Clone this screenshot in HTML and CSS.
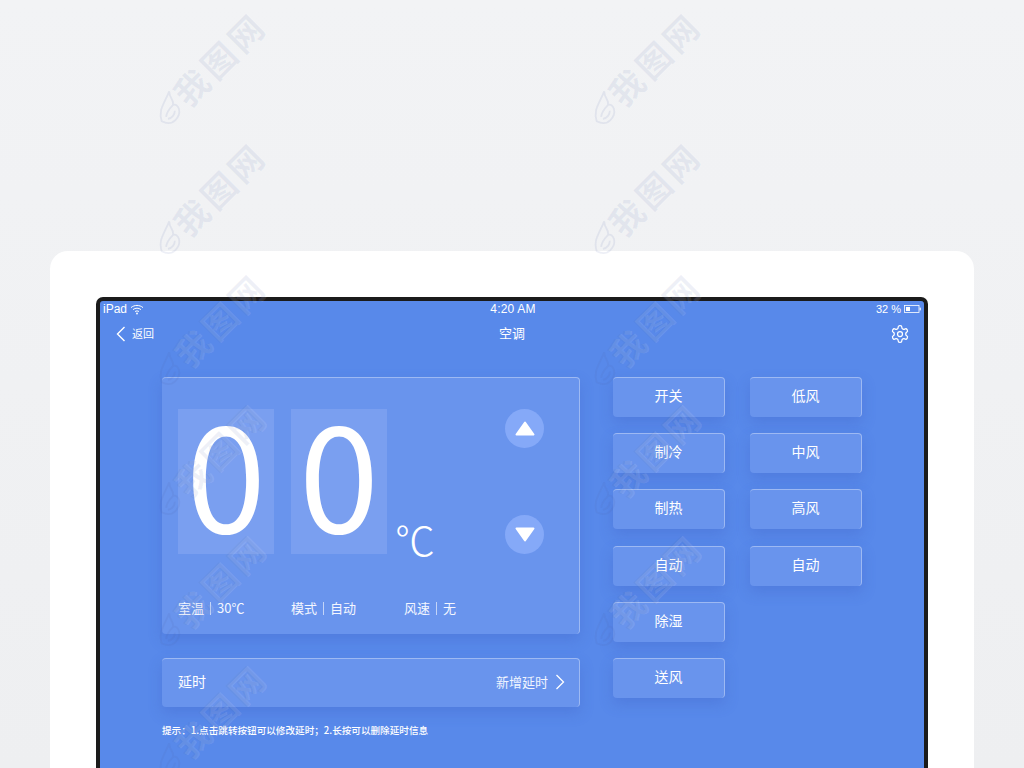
FILE: index.html
```html
<!DOCTYPE html>
<html lang="zh-CN">
<head>
    <meta charset="UTF-8">
    <meta name="viewport" content="width=device-width, initial-scale=1.0">
    <title>空调</title>
    <link rel="stylesheet" href="styles.css">
</head>
<body>
    <div class="sheet">
        <div class="device">
            <!-- Status bar -->
            <div class="status-bar">
                <div class="status-left">
                    <span>iPad</span>
                    <svg class="wifi" width="14" height="11" viewBox="0 0 14 11" fill="none" stroke="#fff" stroke-width="1">
                        <path d="M1 3.6C4.4.7 9.6.7 13 3.6"/>
                        <path d="M3 5.6c2.3-1.9 5.7-1.9 8 0"/>
                        <path d="M5 7.6c1.2-.9 2.8-.9 4 0"/>
                        <circle cx="7" cy="9.5" r=".9" fill="#fff" stroke="none"/>
                    </svg>
                </div>
                <span class="status-time">4:20 AM</span>
                <div class="status-right">
                    <span>32 %</span>
                    <svg width="17" height="8" viewBox="0 0 17 8">
                        <rect x=".5" y=".5" width="14.5" height="7" fill="none" stroke="#fff" stroke-width=".8"/>
                        <rect x="2" y="2" width="4" height="4" fill="#fff"/>
                        <rect x="15.6" y="2.6" width="1.2" height="2.8" fill="#fff"/>
                    </svg>
                </div>
            </div>

            <!-- Nav bar -->
            <div class="nav-bar">
                <div class="nav-back">
                    <svg width="10" height="16" viewBox="0 0 10 16" fill="none" stroke="#fff" stroke-width="1.4">
                        <path d="M8.5 1 1.5 8l7 7"/>
                    </svg>
                    <span>返回</span>
                </div>
                <span class="nav-title">空调</span>
                <svg class="nav-gear" width="20" height="20" viewBox="0 0 24 24" fill="none" stroke="#fff" stroke-width="1.5">
                    <path d="M12.22 2h-.44a2 2 0 0 0-2 2v.18a2 2 0 0 1-1 1.73l-.43.25a2 2 0 0 1-2 0l-.15-.08a2 2 0 0 0-2.73.73l-.22.38a2 2 0 0 0 .73 2.73l.15.1a2 2 0 0 1 1 1.72v.51a2 2 0 0 1-1 1.74l-.15.09a2 2 0 0 0-.73 2.73l.22.38a2 2 0 0 0 2.73.73l.15-.08a2 2 0 0 1 2 0l.43.25a2 2 0 0 1 1 1.73V20a2 2 0 0 0 2 2h.44a2 2 0 0 0 2-2v-.18a2 2 0 0 1 1-1.73l.43-.25a2 2 0 0 1 2 0l.15.08a2 2 0 0 0 2.73-.73l.22-.39a2 2 0 0 0-.73-2.73l-.15-.08a2 2 0 0 1-1-1.74v-.5a2 2 0 0 1 1-1.74l.15-.09a2 2 0 0 0 .73-2.73l-.22-.38a2 2 0 0 0-2.73-.73l-.15.08a2 2 0 0 1-2 0l-.43-.25a2 2 0 0 1-1-1.73V4a2 2 0 0 0-2-2z"/>
                    <circle cx="12" cy="12" r="3"/>
                </svg>
            </div>

            <div class="content">
                <div class="left-col">
                    <!-- Temperature panel -->
                    <div class="panel temp-panel">
                        <div class="temp-row">
                            <div class="digit">0</div>
                            <div class="digit">0</div>
                            <div class="unit">℃</div>
                            <div class="arrows">
                                <div class="round-btn">
                                    <svg width="20" height="15" viewBox="0 0 20 15"><path d="M10 1.5 18.5 13.5H1.5Z" fill="#fff" stroke="#fff" stroke-width="2" stroke-linejoin="round"/></svg>
                                </div>
                                <div class="round-btn">
                                    <svg width="20" height="15" viewBox="0 0 20 15"><path d="M10 13.5 18.5 1.5H1.5Z" fill="#fff" stroke="#fff" stroke-width="2" stroke-linejoin="round"/></svg>
                                </div>
                            </div>
                        </div>
                        <div class="readouts">
                            <div class="readout"><span>室温</span><i></i><span>30℃</span></div>
                            <div class="readout"><span>模式</span><i></i><span>自动</span></div>
                            <div class="readout"><span>风速</span><i></i><span>无</span></div>
                        </div>
                    </div>

                    <!-- Delay row -->
                    <div class="panel delay-row">
                        <span class="delay-label">延时</span>
                        <div class="delay-add">
                            <span>新增延时</span>
                            <svg width="10" height="16" viewBox="0 0 10 16" fill="none" stroke="#fff" stroke-width="1.3">
                                <path d="M1.5 1l7 7-7 7"/>
                            </svg>
                        </div>
                    </div>

                    <p class="hint">提示：1.点击跳转按钮可以修改延时；2.长按可以删除延时信息</p>
                </div>

                <div class="btn-col">
                    <div class="panel btn">开关</div>
                    <div class="panel btn">制冷</div>
                    <div class="panel btn">制热</div>
                    <div class="panel btn">自动</div>
                    <div class="panel btn">除湿</div>
                    <div class="panel btn">送风</div>
                </div>
                <div class="btn-col">
                    <div class="panel btn">低风</div>
                    <div class="panel btn">中风</div>
                    <div class="panel btn">高风</div>
                    <div class="panel btn">自动</div>
                </div>
            </div>
        </div>
    </div>

    <!-- Watermark laid over the whole picture -->
    <div class="marks">
        <div class="mark"><svg class="flame" width="30" height="36" viewBox="0 0 34 36"><path d="M2 22C8 10 18 10 32 4 26 10 30 14 24 18 30 20 26 32 14 32 8 32 4 28 2 22ZM9 22C14 18 19 18 24 18M9 25C13 28 18 27 21 24"/></svg><span>我图网</span></div>
        <div class="mark"><svg class="flame" width="30" height="36" viewBox="0 0 34 36"><path d="M2 22C8 10 18 10 32 4 26 10 30 14 24 18 30 20 26 32 14 32 8 32 4 28 2 22ZM9 22C14 18 19 18 24 18M9 25C13 28 18 27 21 24"/></svg><span>我图网</span></div>
        <div class="mark"><svg class="flame" width="30" height="36" viewBox="0 0 34 36"><path d="M2 22C8 10 18 10 32 4 26 10 30 14 24 18 30 20 26 32 14 32 8 32 4 28 2 22ZM9 22C14 18 19 18 24 18M9 25C13 28 18 27 21 24"/></svg><span>我图网</span></div>
        <div class="mark"><svg class="flame" width="30" height="36" viewBox="0 0 34 36"><path d="M2 22C8 10 18 10 32 4 26 10 30 14 24 18 30 20 26 32 14 32 8 32 4 28 2 22ZM9 22C14 18 19 18 24 18M9 25C13 28 18 27 21 24"/></svg><span>我图网</span></div>
        <div class="mark"><svg class="flame" width="30" height="36" viewBox="0 0 34 36"><path d="M2 22C8 10 18 10 32 4 26 10 30 14 24 18 30 20 26 32 14 32 8 32 4 28 2 22ZM9 22C14 18 19 18 24 18M9 25C13 28 18 27 21 24"/></svg><span>我图网</span></div>
        <div class="mark"><svg class="flame" width="30" height="36" viewBox="0 0 34 36"><path d="M2 22C8 10 18 10 32 4 26 10 30 14 24 18 30 20 26 32 14 32 8 32 4 28 2 22ZM9 22C14 18 19 18 24 18M9 25C13 28 18 27 21 24"/></svg><span>我图网</span></div>
        <div class="mark"><svg class="flame" width="30" height="36" viewBox="0 0 34 36"><path d="M2 22C8 10 18 10 32 4 26 10 30 14 24 18 30 20 26 32 14 32 8 32 4 28 2 22ZM9 22C14 18 19 18 24 18M9 25C13 28 18 27 21 24"/></svg><span>我图网</span></div>
        <div class="mark"><svg class="flame" width="30" height="36" viewBox="0 0 34 36"><path d="M2 22C8 10 18 10 32 4 26 10 30 14 24 18 30 20 26 32 14 32 8 32 4 28 2 22ZM9 22C14 18 19 18 24 18M9 25C13 28 18 27 21 24"/></svg><span>我图网</span></div>
        <div class="mark"><svg class="flame" width="30" height="36" viewBox="0 0 34 36"><path d="M2 22C8 10 18 10 32 4 26 10 30 14 24 18 30 20 26 32 14 32 8 32 4 28 2 22ZM9 22C14 18 19 18 24 18M9 25C13 28 18 27 21 24"/></svg><span>我图网</span></div>
        <div class="mark"><svg class="flame" width="30" height="36" viewBox="0 0 34 36"><path d="M2 22C8 10 18 10 32 4 26 10 30 14 24 18 30 20 26 32 14 32 8 32 4 28 2 22ZM9 22C14 18 19 18 24 18M9 25C13 28 18 27 21 24"/></svg><span>我图网</span></div>
        <div class="mark"><svg class="flame" width="30" height="36" viewBox="0 0 34 36"><path d="M2 22C8 10 18 10 32 4 26 10 30 14 24 18 30 20 26 32 14 32 8 32 4 28 2 22ZM9 22C14 18 19 18 24 18M9 25C13 28 18 27 21 24"/></svg><span>我图网</span></div>
    </div>
</body>
</html>
```

FILE: styles.css
```css
/* Basic Reset */
* {
    box-sizing: border-box;
    margin: 0;
    padding: 0;
}

body {
    font-family: "Noto Sans CJK SC", "Noto Sans", sans-serif;
    background: linear-gradient(#f2f3f5, #eeeff1);
    height: 768px;
    overflow: hidden;
    position: relative;
    color: #fff;
}

.sheet {
    margin: 251px 50px 0;
    height: 517px;
    padding: 46px 46px 0;
    background-color: #fff;
    border-radius: 18px 18px 0 0;
}

.device {
    height: 471px;
    background-color: #5889ea;
    border: 4px solid #1b1b1b;
    border-bottom: none;
    border-radius: 7px 7px 0 0;
}

/* Status bar */
.status-bar {
    height: 16px;
    padding: 0 3px;
    display: grid;
    grid-template-columns: 1fr auto 1fr;
    align-items: center;
    font-family: "Liberation Sans", Arial, sans-serif;
    font-size: 12px;
}

.status-time {
    margin-left: 2px;
    letter-spacing: 0.2px;
}

.status-left {
    display: flex;
    align-items: center;
    gap: 3px;
}

.status-right {
    display: flex;
    align-items: center;
    justify-content: flex-end;
    gap: 3px;
    font-size: 11px;
}

/* Nav bar */
.nav-bar {
    height: 35px;
    padding: 0 14px 2px 16px;
    display: flex;
    align-items: center;
    justify-content: space-between;
    position: relative;
}

.nav-back {
    display: flex;
    align-items: center;
    gap: 6px;
    font-size: 11px;
}

.nav-back span {
    margin-bottom: 2px;
}

.nav-title {
    position: absolute;
    left: 0;
    right: 0;
    margin-bottom: 2px;
    text-align: center;
    font-size: 13px;
}

/* Main content */
.content {
    padding: 25px 0 0 62px;
    display: flex;
}

.left-col {
    width: 418px;
    margin-right: 33px;
}

.panel {
    background-color: #6994ed;
    border-radius: 4px;
    border-top: 1px solid rgba(255, 255, 255, 0.35);
    border-right: 1px solid rgba(255, 255, 255, 0.35);
    box-shadow: 0 6px 14px rgba(60, 90, 190, 0.28);
}

.temp-panel {
    height: 257px;
    padding: 31px 16px 0;
}

.temp-row {
    display: flex;
    height: 145px;
}

.digit {
    width: 96px;
    height: 145px;
    margin-right: 17px;
    background-color: #7a9ff0;
    font-size: 144px;
    line-height: 123px;
    text-align: center;
}

.unit {
    width: 92px;
    margin-left: -9px;
    font-size: 40px;
    font-weight: 300;
    line-height: 40px;
    padding-top: 110px;
}

.arrows {
    margin-left: 18px;
    height: 145px;
    display: flex;
    flex-direction: column;
    justify-content: space-between;
}

.round-btn {
    width: 39px;
    height: 39px;
    border-radius: 50%;
    background-color: #85a9f8;
    display: flex;
    align-items: center;
    justify-content: center;
}

.readouts {
    display: flex;
    margin-top: 45px;
    font-size: 13px;
    line-height: 18px;
}

.readout {
    width: 113px;
    display: flex;
    align-items: center;
    gap: 6px;
    color: #f4f7ff;
}

.readout i {
    width: 1px;
    height: 13px;
    background-color: rgba(255, 255, 255, 0.6);
}

/* Delay row */
.delay-row {
    height: 49px;
    margin-top: 24px;
    padding: 0 14px 2px 16px;
    display: flex;
    align-items: center;
    justify-content: space-between;
}

.delay-label {
    margin-bottom: 2px;
    font-size: 14px;
}

.delay-add {
    display: flex;
    align-items: center;
    gap: 7px;
    font-size: 13px;
    color: #f0f4ff;
}

.delay-add span {
    margin-bottom: 2px;
}

.hint {
    margin-top: 16px;
    font-size: 9.6px;
    font-weight: 500;
    line-height: 15px;
}

/* Mode and fan buttons */
.btn-col {
    width: 112px;
    margin-right: 25px;
    display: flex;
    flex-direction: column;
    gap: 16.2px;
}

.btn {
    height: 40px;
    padding-bottom: 5px;
    display: flex;
    align-items: center;
    justify-content: center;
    font-size: 14px;
}

/* Watermark */
.marks {
    position: absolute;
    top: 0;
    left: 0;
    width: 1024px;
    height: 768px;
    overflow: hidden;
    padding: 47px 0 0 136px;
    display: grid;
    grid-template-columns: repeat(2, 435px);
    grid-auto-rows: 130.4px;
    pointer-events: none;
}

.mark {
    width: 150px;
    height: 40px;
    display: flex;
    align-items: center;
    font-size: 34px;
    line-height: 40px;
    font-weight: 700;
    letter-spacing: 4px;
    white-space: nowrap;
    color: rgba(80, 100, 170, 0.09);
    text-shadow: 1px 1px 0 rgba(255, 255, 255, 0.1);
    transform: rotate(-45deg);
}

.flame {
    flex: none;
    fill: none;
    stroke: rgba(80, 100, 170, 0.1);
    stroke-width: 2;
}
```
